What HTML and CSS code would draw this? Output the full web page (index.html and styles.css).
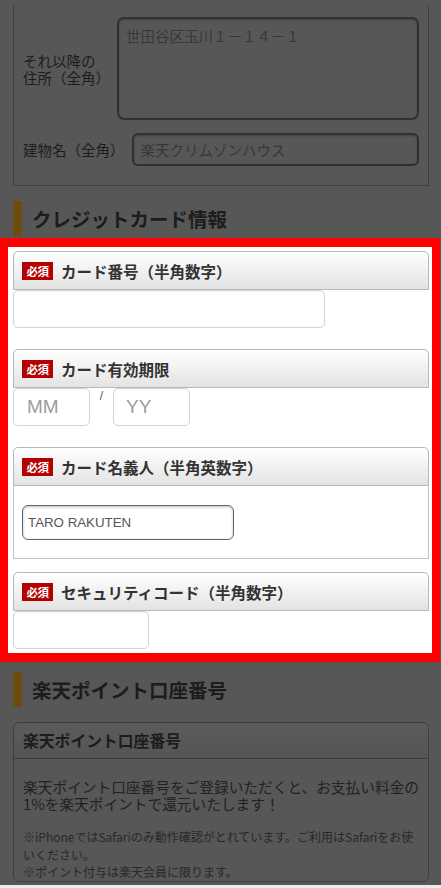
FILE: index.html
```html
<!DOCTYPE html>
<html lang="ja">
<head>
<meta charset="utf-8">
<title>お支払い情報の入力</title>
<link rel="stylesheet" href="styles.css">
</head>
<body>
<main class="page">
  <section class="addr-card">
    <div class="addr-row">
      <label class="addr-label">それ以降の<br>住所（全角）</label>
      <textarea class="addr-area" readonly>世田谷区玉川１－１４－１</textarea>
    </div>
    <div class="addr-row">
      <label class="addr-label">建物名（全角）</label>
      <input class="addr-input" type="text" value="楽天クリムゾンハウス" readonly>
    </div>
  </section>

  <h2 class="sec-title">クレジットカード情報</h2>

  <section class="focus">
    <div class="field">
      <div class="field-head"><span class="req">必須</span>カード番号（半角数字）</div>
      <input class="text-box box-number" type="text">
    </div>

    <div class="field">
      <div class="field-head"><span class="req">必須</span>カード有効期限</div>
      <div class="expiry">
        <input class="text-box box-month" type="text" placeholder="MM">
        <span class="expiry-sep">/</span>
        <input class="text-box box-year" type="text" placeholder="YY">
      </div>
    </div>

    <div class="field field-name">
      <div class="field-head"><span class="req">必須</span>カード名義人（半角英数字）</div>
      <div class="field-body">
        <input class="name-box" type="text" value="TARO RAKUTEN">
      </div>
    </div>

    <div class="field field-last">
      <div class="field-head"><span class="req">必須</span>セキュリティコード（半角数字）</div>
      <input class="text-box box-cvc" type="text">
    </div>
  </section>

  <h2 class="sec-title sec-title-points">楽天ポイント口座番号</h2>

  <section class="info-card">
    <div class="info-head">楽天ポイント口座番号</div>
    <div class="info-body">
      <p class="info-lead">楽天ポイント口座番号をご登録いただくと、お支払い料金の1%を楽天ポイントで還元いたします！</p>
      <p class="info-note">※iPhoneではSafariのみ動作確認がとれています。ご利用はSafariをお使いください。<br>※ポイント付与は楽天会員に限ります。</p>
    </div>
  </section>
</main>
<div class="sysbar"></div>
</body>
</html>
```

FILE: styles.css
```css
* {
  box-sizing: border-box;
}

html,
body {
  margin: 0;
  padding: 0;
}

body {
  width: 441px;
  background: #575757;
  font-family: "Noto Sans CJK JP", "Liberation Sans", sans-serif;
  color: #1f1f1f;
  text-autospace: no-autospace;
}

.page {
  padding-top: 5px;
  padding-bottom: 40px;
}

/* ---- dimmed address block ---- */
.addr-card {
  margin: 0 12px 0 13px;
  border: 1px solid #404040;
  border-top: 0;
  padding: 12px 9px 19px 9px;
  display: flex;
  flex-direction: column;
  gap: 13px;
}

.addr-row {
  display: flex;
  align-items: center;
  gap: 7px;
}

.addr-label {
  font-size: 14.5px;
  line-height: 17px;
  color: #1d1d1d;
  white-space: nowrap;
}

.addr-area,
.addr-input {
  flex: 1;
  min-width: 0;
  font-family: "Noto Sans CJK JP", sans-serif;
  font-size: 14.5px;
  color: #383838;
  background: #575757;
  border: 2px solid #303030;
  border-radius: 7px;
  box-shadow: inset 0 1px 2px rgba(0, 0, 0, 0.25);
  outline: none;
}

.addr-area {
  height: 103px;
  padding: 8px 7px;
  line-height: 18px;
  resize: none;
  overflow: hidden;
}

.addr-input {
  height: 33px;
  padding: 0 7px;
  border-radius: 6px;
}

/* ---- section headings ---- */
.sec-title {
  margin: 15px 12px 0 13px;
  height: 35px;
  border-left: 9px solid #6d4c10;
  padding-left: 10px;
  display: flex;
  align-items: center;
  font-size: 19.5px;
  font-weight: 700;
  color: #1c1c1c;
}

.sec-title-points {
  margin-top: 10px;
}

/* ---- highlighted card form ---- */
.focus {
  margin: 2px 1px 0 0;
  background: #fff;
  border: solid #ff0000;
  border-width: 9px 8px 9px 8px;
  padding: 4px 3px 4px 5px;
}

.field + .field {
  margin-top: 21px;
}

.field-name + .field-last {
  margin-top: 13px;
}

.field-head {
  height: 39px;
  display: flex;
  align-items: center;
  gap: 8px;
  padding: 0 8px;
  border: 1px solid #b7b7b7;
  border-radius: 5px 5px 0 0;
  background: linear-gradient(#ffffff, #e3e3e3);
  font-size: 15.5px;
  font-weight: 700;
  color: #333;
}

.req {
  width: 31px;
  height: 18px;
  display: flex;
  align-items: center;
  justify-content: center;
  background: #b30000;
  color: #fff;
  font-size: 11.5px;
  font-weight: 700;
  letter-spacing: -0.5px;
}

.text-box {
  display: block;
  height: 38px;
  padding: 0 13px;
  border: 1px solid #d3d3d3;
  border-radius: 5px;
  background: #fff;
  box-shadow: inset 0 1px 1px rgba(0, 0, 0, 0.04);
  font-family: "Liberation Sans", Arial, sans-serif;
  font-size: 19px;
  color: #333;
  outline: none;
}

.text-box::placeholder {
  color: #9c9c9c;
}

.box-number {
  width: 312px;
}

.expiry {
  display: flex;
}

.box-month {
  width: 77px;
}

.box-year {
  width: 77px;
  padding-left: 12px;
}

.expiry-sep {
  width: 23px;
  text-align: center;
  font-family: "Liberation Sans", Arial, sans-serif;
  font-size: 12px;
  line-height: 12px;
  padding-top: 2px;
  color: #555;
}

.field-body {
  border: 1px solid #c3c3c3;
  border-top: 0;
  padding: 19px 8px 18px;
}

.name-box {
  display: block;
  width: 212px;
  height: 35px;
  padding: 0 5px;
  border: 1px solid #56677b;
  border-radius: 6px;
  background: #fff;
  box-shadow: inset 0 1px 3px rgba(0, 0, 0, 0.25);
  font-family: "Liberation Sans", Arial, sans-serif;
  font-size: 13.3px;
  color: #555;
  outline: none;
}

.box-cvc {
  width: 136px;
}

/* ---- dimmed points block ---- */
.info-card {
  margin: 15px 12px 0 13px;
  border: 1px solid #3e3e3e;
  border-radius: 6px;
}

.info-head {
  height: 36px;
  padding: 0 9px;
  display: flex;
  align-items: center;
  border-bottom: 1px solid #3c3c3c;
  border-radius: 6px 6px 0 0;
  background: linear-gradient(#5b5b5b, #555555);
  font-size: 15.8px;
  font-weight: 700;
  color: #1c1c1c;
}

.info-body {
  padding: 19px 0 0 9px;
}

.info-lead {
  margin: 0;
  font-size: 14.7px;
  line-height: 17px;
  color: #222;
}

.info-note {
  margin: 16px 6px 0 0;
  font-size: 12px;
  line-height: 17.5px;
  color: #282828;
}

.sysbar {
  position: fixed;
  left: 0;
  right: 0;
  bottom: 0;
  height: 3px;
  background: #ececec;
}
```
